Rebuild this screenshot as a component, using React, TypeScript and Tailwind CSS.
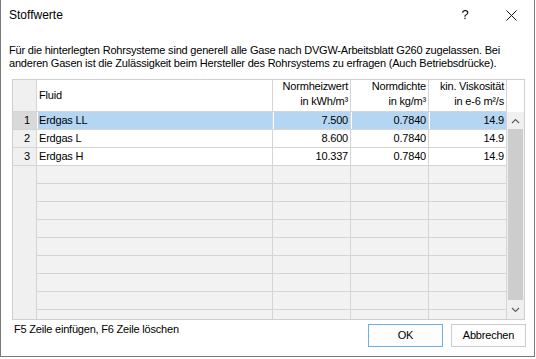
import React from "react";

interface FluidRow {
  nr: number;
  name: string;
  heizwert: string;
  dichte: string;
  viskositaet: string;
  selected?: boolean;
}

const fluids: FluidRow[] = [
  { nr: 1, name: "Erdgas LL", heizwert: "7.500", dichte: "0.7840", viskositaet: "14.9", selected: true },
  { nr: 2, name: "Erdgas L", heizwert: "8.600", dichte: "0.7840", viskositaet: "14.9" },
  { nr: 3, name: "Erdgas H", heizwert: "10.337", dichte: "0.7840", viskositaet: "14.9" },
];

const emptyRows = Array.from({ length: 9 }, (_, i) => i);

function HeaderCell({ top, bottom }: { top: string; bottom: string }) {
  return (
    <div className="w-[78px] border-r border-b border-[#d5d5d5] flex flex-col items-end justify-center pr-[2px] pb-[3px] leading-[15px] text-right">
      <span>{top}</span>
      <span>{bottom}</span>
    </div>
  );
}

function DataCell({ value, selected, wide }: { value: string; selected?: boolean; wide?: boolean }) {
  return (
    <div className={wide ? "w-[236px] border-r border-b border-[#d5d5d5] pl-px" : "w-[78px] border-r border-b border-[#d5d5d5] pl-px"}>
      <div
        className={
          (selected ? "bg-[#b4d6f3] " : "") +
          (wide ? "h-full flex items-center pl-px" : "h-full flex items-center justify-end pr-[2px]")
        }
      >
        {value}
      </div>
    </div>
  );
}

function ScrollBar() {
  return (
    <div className="w-[17px] bg-[#f0f0f0] flex flex-col">
      <div className="h-[17px] flex items-center justify-center">
        <svg width="9" height="6" viewBox="0 0 9 6">
          <path d="M1 5 L4.5 1.5 L8 5" fill="none" stroke="#606060" strokeWidth="1.2" />
        </svg>
      </div>
      <div className="flex-1 mx-px bg-[#cdcdcd]" />
      <div className="h-[19px] flex items-center justify-center">
        <svg width="9" height="6" viewBox="0 0 9 6">
          <path d="M1 1 L4.5 4.5 L8 1" fill="none" stroke="#606060" strokeWidth="1.2" />
        </svg>
      </div>
    </div>
  );
}

export default function App() {
  return (
    <div className="w-[536px] h-[359px] bg-white font-['Liberation_Sans',Arial,sans-serif] text-[11px] tracking-[-0.2px] text-black">
      <div className="w-[535px] h-[357px] border-l border-r border-b border-[#7a7a7a] flex flex-col">
        {/* title bar */}
        <div className="h-[30px] flex items-center text-[12px] tracking-normal">
          <span className="pl-[8px] flex-1">Stoffwerte</span>
          <div className="w-[46px] h-full flex items-center justify-center text-[13px]">?</div>
          <div className="w-[46px] h-full flex items-center justify-center">
            <svg width="11" height="11" viewBox="0 0 11 11">
              <path d="M0.5 0.5 L10.5 10.5 M10.5 0.5 L0.5 10.5" stroke="#111" strokeWidth="1" />
            </svg>
          </div>
        </div>

        <p className="mt-[14px] pl-[8px] leading-[13px] whitespace-nowrap">
          Für die hinterlegten Rohrsysteme sind generell alle Gase nach DVGW-Arbeitsblatt G260 zugelassen. Bei
          <br />
          anderen Gasen ist die Zulässigkeit beim Hersteller des Rohrsystems zu erfragen (Auch Betriebsdrücke).
        </p>

        {/* grid */}
        <div className="mt-[9px] ml-[11px] w-[513px] border border-[#cfcfcf] flex flex-col">
          <div className="flex h-[32px]">
            <div className="w-[24px] bg-[#f0f0f0] border-r border-b border-[#d5d5d5]" />
            <div className="w-[236px] border-r border-b border-[#d5d5d5] flex items-center pl-[2px]">Fluid</div>
            <HeaderCell top="Normheizwert" bottom="in kWh/m³" />
            <HeaderCell top="Normdichte" bottom="in kg/m³" />
            <HeaderCell top="kin. Viskosität" bottom="in e-6 m²/s" />
            <div className="w-[17px]" />
          </div>
          <div className="flex h-[207px] overflow-hidden">
            <div className="w-[494px] flex flex-col">
              {fluids.map((f) => (
                <div key={f.nr} className="flex h-[18px] shrink-0 bg-white">
                  <div
                    className={
                      f.selected
                        ? "w-[24px] bg-[#d9d9d9] border-r border-b border-[#d5d5d5] flex items-center justify-end pr-[6px]"
                        : "w-[24px] bg-[#f0f0f0] border-r border-b border-[#d5d5d5] flex items-center justify-end pr-[6px]"
                    }
                  >
                    {f.nr}
                  </div>
                  <DataCell value={f.name} selected={f.selected} wide />
                  <DataCell value={f.heizwert} selected={f.selected} />
                  <DataCell value={f.dichte} selected={f.selected} />
                  <DataCell value={f.viskositaet} selected={f.selected} />
                </div>
              ))}
              {emptyRows.map((i) => (
                <div key={i} className="flex h-[18px] shrink-0 bg-[#f2f2f2]">
                  <div className="w-[24px] bg-[#f0f0f0] border-r border-[#d5d5d5]" />
                  <div className="w-[236px] border-r border-b border-[#d5d5d5]" />
                  <div className="w-[78px] border-r border-b border-[#d5d5d5]" />
                  <div className="w-[78px] border-r border-b border-[#d5d5d5]" />
                  <div className="w-[78px] border-r border-b border-[#d5d5d5]" />
                </div>
              ))}
            </div>
            <ScrollBar />
          </div>
        </div>

        {/* footer */}
        <div className="flex justify-between mt-[2px] pr-[8px]">
          <span className="pl-[13px] leading-[14px]">F5 Zeile einfügen, F6 Zeile löschen</span>
          <div className="flex gap-[8px] mt-[2px]">
            <button className="w-[75px] h-[23px] border border-[#6cb1e4] bg-[#fdfdfd] flex items-center justify-center">
              OK
            </button>
            <button className="w-[75px] h-[23px] border border-[#cccccc] bg-[#fdfdfd] flex items-center justify-center">
              Abbrechen
            </button>
          </div>
        </div>
      </div>
    </div>
  );
}
